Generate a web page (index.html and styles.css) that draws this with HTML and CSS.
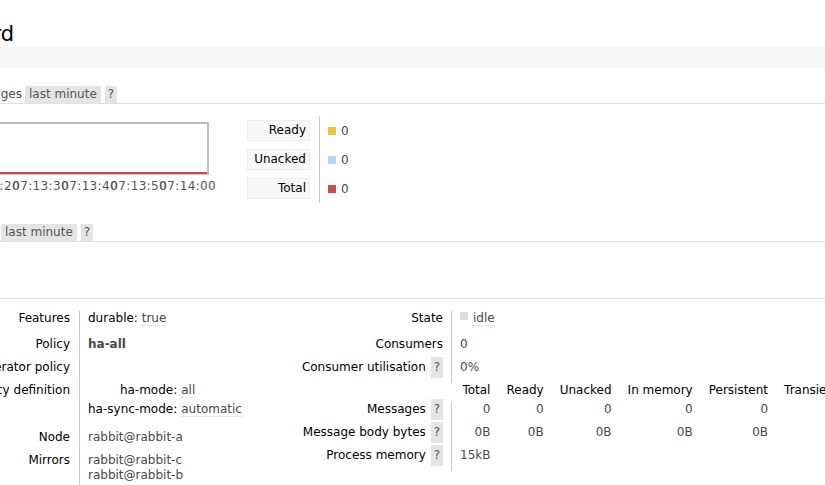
FILE: index.html
```html
<!DOCTYPE html>
<html>
<head>
<meta charset="utf-8">
<title>Queue</title>
<link rel="stylesheet" href="styles.css">
</head>
<body>
<div class="page">
  <h1 class="title">Queue ha.orders.forward</h1>
  <h2 class="section-bar">Overview</h2>

  <h3 class="chart-head">
    <span class="head-label head-label-q">Queued messages</span>
    <span class="pill">last minute</span>
    <span class="pill pill-help">?</span>
  </h3>

  <div class="chart-row">
    <div class="chart-col">
      <div class="plot"><div class="plot-line"></div></div>
      <div class="ticks">
        <span class="tick">07:13:10</span>
        <span class="tick">07:13:20</span>
        <span class="tick">07:13:30</span>
        <span class="tick">07:13:40</span>
        <span class="tick">07:13:50</span>
        <span class="tick">07:14:00</span>
      </div>
    </div>
    <table class="legend">
      <tr><th><div class="legend-label">Ready</div></th><td><span class="swatch sw-ready"></span>0</td></tr>
      <tr><th><div class="legend-label">Unacked</div></th><td><span class="swatch sw-unacked"></span>0</td></tr>
      <tr><th><div class="legend-label">Total</div></th><td><span class="swatch sw-total"></span>0</td></tr>
    </table>
  </div>

  <h3 class="chart-head rates-head">
    <span class="head-label head-label-r">Message rates</span>
    <span class="pill">last minute</span>
    <span class="pill pill-help">?</span>
  </h3>

  <h3 class="details-head"><span class="head-label head-label-d">Details</span></h3>

  <div class="details">
    <table class="facts facts-left">
      <tr class="row-first"><th>Features</th><td><span class="key">durable:</span> <abbr class="val">true</abbr></td></tr>
      <tr><th>Policy</th><td><b class="policy">ha-all</b></td></tr>
      <tr><th>Operator policy</th><td></td></tr>
      <tr class="row-def"><th>Effective policy definition</th><td>
        <table class="mini">
          <tr><th>ha-mode:</th><td><abbr class="val">all</abbr></td></tr>
          <tr><th>ha-sync-mode:</th><td><abbr class="val">automatic</abbr></td></tr>
        </table>
      </td></tr>
      <tr><th>Node</th><td>rabbit@rabbit-a</td></tr>
      <tr><th>Mirrors</th><td>rabbit@rabbit-c<br>rabbit@rabbit-b</td></tr>
    </table>

    <div class="facts-right">
      <table class="facts facts-state">
        <tr class="row-state"><th>State</th><td><span class="status-dot"></span><abbr class="val">idle</abbr></td></tr>
        <tr><th>Consumers</th><td>0</td></tr>
        <tr><th>Consumer utilisation <span class="help">?</span></th><td>0%</td></tr>
      </table>
      <table class="facts facts-counts">
        <tr class="row-head"><th></th><th class="col">Total</th><th class="col">Ready</th><th class="col">Unacked</th><th class="col">In memory</th><th class="col">Persistent</th><th class="col">Transient, Paged Out</th></tr>
        <tr><th>Messages <span class="help">?</span></th><td class="num first">0</td><td class="num">0</td><td class="num">0</td><td class="num">0</td><td class="num">0</td><td class="num">0</td></tr>
        <tr><th>Message body bytes <span class="help">?</span></th><td class="num first">0B</td><td class="num">0B</td><td class="num">0B</td><td class="num">0B</td><td class="num">0B</td><td class="num">0B</td></tr>
        <tr><th>Process memory <span class="help">?</span></th><td class="num first">15kB</td><td class="num"></td><td class="num"></td><td class="num"></td><td class="num"></td><td class="num"></td></tr>
      </table>
    </div>
  </div>
</div>
</body>
</html>
```

FILE: styles.css
```css
html, body {
  margin: 0;
  padding: 0;
  overflow: hidden;
  background: #fff;
}
body {
  font-family: "DejaVu Sans", Verdana, sans-serif;
  font-size: 12px;
  line-height: 15px;
  color: #484848;
}
.page {
  margin-left: -300px;
  width: 1500px;
  padding-top: 22px;
}
.title {
  margin: 0;
  width: 314px;
  text-align: right;
  font-size: 21px;
  line-height: 24px;
  font-weight: normal;
  color: #000;
  white-space: nowrap;
}
.section-bar {
  margin: 0;
  height: 22px;
  padding-left: 25px;
  background: #f7f7f7;
  font-size: 12px;
  font-weight: normal;
  line-height: 22px;
  color: #f7f7f7;
}
.chart-head {
  display: flex;
  align-items: flex-end;
  margin: 18px 0 0 0;
  border-bottom: 1px solid #e0e0e0;
  font-size: 12px;
  font-weight: normal;
  line-height: 15px;
}
.head-label {
  flex-shrink: 0;
  text-align: right;
  white-space: nowrap;
  padding-bottom: 1px;
}
.head-label-q { width: 322px; }
.head-label-r { width: 298px; }
.head-label-d { width: 250px; }
.pill {
  margin-left: 3px;
  padding: 1px 4px;
  background: #e4e4e4;
  color: #555;
}
.pill-help {
  margin-left: 4px;
  padding: 1px 3px;
}
.chart-row {
  display: flex;
  align-items: flex-start;
  margin-top: 12px;
}
.chart-col {
  flex-shrink: 0;
  width: 409px;
  margin-left: 100px;
  padding-top: 6px;
}
.plot {
  height: 50px;
  border-top: 2px solid #bdbdbd;
  border-right: 2px solid #bdbdbd;
  border-bottom: 1px solid #c9c9c9;
  position: relative;
}
.plot-line {
  position: absolute;
  left: 0;
  right: 0;
  bottom: 0;
  height: 2px;
  background: #cb4b4b;
}
.ticks {
  display: flex;
  justify-content: flex-end;
  margin-top: 4px;
  margin-right: -7px;
  color: #545454;
}
.tick {
  flex-shrink: 0;
  letter-spacing: 0.35px;
  white-space: nowrap;
  margin-right: -7.7px;
}
.tick:last-child {
  margin-right: 0;
}
.legend {
  flex-shrink: 0;
  margin-left: 38px;
  border-collapse: separate;
  border-spacing: 0;
}
.legend th {
  padding: 4px 9px 4px 0;
  font-weight: normal;
}
.legend-label {
  width: 55px;
  padding: 0 3px;
  height: 19px;
  line-height: 19px;
  text-align: right;
  background: #f8f8f8;
  border: 1px solid #eee;
  color: #000;
}
.legend td {
  border-left: 1px solid #ccc;
  padding: 1px 8px 0 8px;
  white-space: nowrap;
}
.swatch {
  display: inline-block;
  width: 8px;
  height: 8px;
  margin-right: 5px;
  vertical-align: 0;
}
.sw-ready { background: #edc240; }
.sw-unacked { background: #afd8f8; }
.sw-total { background: #cb4b4b; }

.rates-head {
  margin-top: 21px;
}
.details-head {
  margin: 38px 0 0 0;
  border-bottom: 1px solid #e0e0e0;
  font-size: 12px;
  font-weight: normal;
  line-height: 17px;
  display: flex;
}
.details {
  display: flex;
  align-items: flex-start;
  margin-top: 12px;
}
.facts {
  border-collapse: separate;
  border-spacing: 0;
}
.facts th {
  font-weight: normal;
  color: #000;
  text-align: right;
  white-space: nowrap;
  vertical-align: top;
  padding: 0 8px 8px 0;
}
.facts td {
  border-left: 1px solid #ccc;
  padding: 0 8px 8px 8px;
  vertical-align: top;
  white-space: nowrap;
}
.facts-left {
  flex-shrink: 0;
  margin-left: 200px;
}
.facts-left > tbody > tr > th {
  width: 170px;
  min-width: 170px;
  padding-right: 9px;
}
.facts-left > tbody > tr > td {
  width: 170px;
  min-width: 170px;
}
.facts-left .row-first > th,
.facts-left .row-first > td {
  padding-bottom: 11px;
}
.facts-left .row-def > th,
.facts-left .row-def > td {
  padding-bottom: 13px;
}
.key {
  color: #000;
}
abbr.val {
  text-decoration: none;
  border-bottom: 1px dotted #d8d8d8;
}
.policy {
  font-weight: bold;
  color: #484848;
}
.mini {
  border-collapse: collapse;
  border-spacing: 0;
}
.mini th {
  width: 88px;
  padding: 0 4px 4px 0;
  text-align: right;
  font-weight: normal;
  color: #000;
  white-space: nowrap;
}
.mini td {
  padding: 0 0 4px 0;
  border: 0;
}
.mini tr:last-child th,
.mini tr:last-child td {
  padding-bottom: 0;
}
.facts-right {
  flex-shrink: 0;
  margin-left: 24px;
}
.facts-right .facts > tbody > tr > th:first-child {
  width: 153px;
  min-width: 153px;
}
.facts-state .row-state > th,
.facts-state .row-state > td {
  padding-bottom: 11px;
}
.status-dot {
  display: inline-block;
  width: 8px;
  height: 8px;
  background: #ddd;
  margin: 1px 5px 0 0;
  vertical-align: top;
}
.help {
  display: inline-block;
  padding: 3px 3px;
  margin: -3px 0 -3px 1px;
  background: #e4e4e4;
  color: #555;
}
.facts-counts .row-head th {
  padding-bottom: 4px;
}
.facts-counts th.col {
  text-align: right;
  padding: 0 8px 4px 8px;
}
.facts-counts td.num {
  text-align: right;
  border-left: 0;
}
.facts-counts td.num.first {
  border-left: 1px solid #ccc;
}
```
